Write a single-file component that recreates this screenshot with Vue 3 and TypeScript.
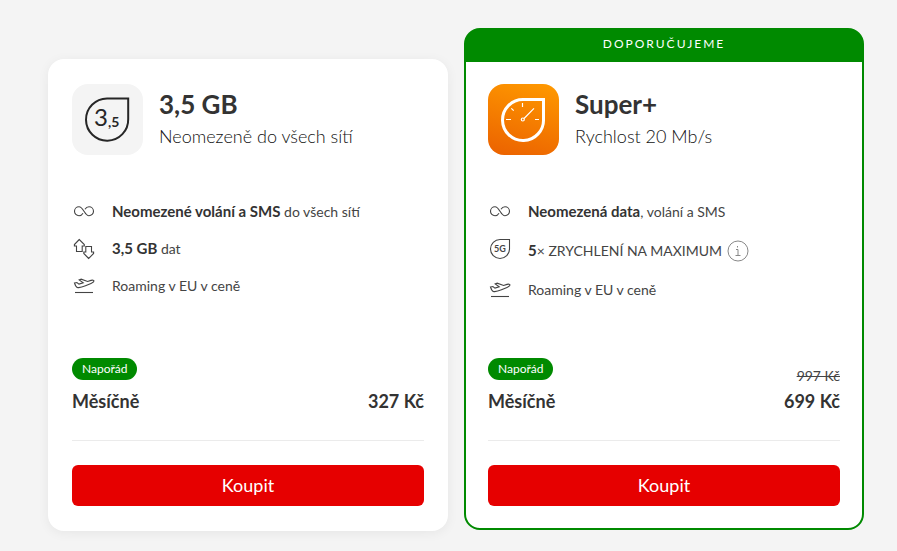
<script setup lang="ts">
type IconName = 'infinity' | 'arrows' | 'plane' | 'fiveG'

interface Feature {
  icon: IconName
  strong?: string
  text: string
  info?: boolean
}

interface Plan {
  id: string
  name: string
  subtitle: string
  tile: 'data' | 'speed'
  banner?: string
  features: Feature[]
  badge: string
  oldPrice?: string
  price: string
}

const plans: Plan[] = [
  {
    id: 'data',
    name: '3,5 GB',
    subtitle: 'Neomezeně do všech sítí',
    tile: 'data',
    features: [
      { icon: 'infinity', strong: 'Neomezené volání a SMS', text: ' do všech sítí' },
      { icon: 'arrows', strong: '3,5 GB', text: ' dat' },
      { icon: 'plane', text: 'Roaming v EU v ceně' },
    ],
    badge: 'Napořád',
    price: '327 Kč',
  },
  {
    id: 'super',
    name: 'Super+',
    subtitle: 'Rychlost 20 Mb/s',
    tile: 'speed',
    banner: 'DOPORUČUJEME',
    features: [
      { icon: 'infinity', strong: 'Neomezená data', text: ', volání a SMS' },
      { icon: 'fiveG', strong: '5', text: '× ZRYCHLENÍ NA MAXIMUM', info: true },
      { icon: 'plane', text: 'Roaming v EU v ceně' },
    ],
    badge: 'Napořád',
    oldPrice: '997 Kč',
    price: '699 Kč',
  },
]
</script>

<template>
  <main class="plans">
    <article
      v-for="plan in plans"
      :key="plan.id"
      class="card"
      :class="{ recommended: plan.banner }"
    >
      <p v-if="plan.banner" class="banner">{{ plan.banner }}</p>
      <div class="body">
        <header class="head">
          <div class="tile" :class="plan.tile">
            <svg v-if="plan.tile === 'data'" viewBox="0 0 71 71" aria-hidden="true">
              <path d="M35 14.5H56.2V35A21.1 21.1 0 1 1 35 14.5Z" fill="none" stroke="#262626" stroke-width="2" />
              <text x="22" y="42" class="tile-big">3<tspan dy="1" class="tile-small">,5</tspan></text>
            </svg>
            <svg v-else viewBox="0 0 71 71" aria-hidden="true" fill="none" stroke="#fff">
              <path d="M35 15.5H55.5V35A20.5 20.5 0 1 1 35 15.5Z" stroke-width="3" />
              <path d="M34.5 19v4M18 35.500h5M47 35.500h4M23.300 24.300l2.400 2.400M36 34.500l10-10.200" stroke-width="1.200" />
              <circle cx="34.800" cy="35.500" r="1.500" stroke-width="1.200" />
            </svg>
          </div>
          <div class="titles">
            <h2>{{ plan.name }}</h2>
            <p>{{ plan.subtitle }}</p>
          </div>
        </header>

        <ul class="features">
          <li v-for="feature in plan.features" :key="feature.icon">
            <svg class="icon" viewBox="0 0 24 24" aria-hidden="true">
              <path
                v-if="feature.icon === 'infinity'"
                d="M11 13.200C10 14.900 8.700 15.700 7 15.700A4.500 4.500 0 0 1 7 6.700C11.500 6.700 12.500 15.700 17 15.700A4.500 4.500 0 0 0 17 6.700C15.300 6.700 14 7.500 13 9.200"
              />
              <template v-else-if="feature.icon === 'arrows'">
                <path d="M7.300 2.500L2.400 7.500V9H4.500V14.500H10.200V9H12.300V7.500Z" />
                <path d="M16.700 21.500L11.800 16.500V15H13.800V9.500H19.500V15H21.600V16.500Z" />
              </template>
              <template v-else-if="feature.icon === 'plane'">
                <path d="M2.500 9l2.400-.5 2.100 1.600 4.200-1.300L7.200 6l2-.8 6.400 2.300 3.400-1.100c1.700-.5 3-.2 3 .7s-1.500 1.700-3 2.300l-5.500 2.400c-3.500 1.500-6.500 2.100-8.300 1.600-1.300-.4-1.900-2-2.700-4.400Z" />
                <path d="M3 18.500H21" />
              </template>
              <template v-else>
                <path d="M12 2.500H21.500V12A9.500 9.500 0 1 1 12 2.500Z" />
                <text x="12" y="15" class="five-g">5G</text>
              </template>
            </svg>
            <div class="feature-text">
              <span><strong v-if="feature.strong">{{ feature.strong }}</strong>{{ feature.text }}</span>
              <button v-if="feature.info" type="button" class="info" aria-label="Info">
                <svg viewBox="0 0 22 22" aria-hidden="true">
                  <circle cx="11" cy="11" r="10" />
                  <path d="M9 9.500h2v6M8.500 15.500h5M10.500 6v1.500" />
                </svg>
              </button>
            </div>
          </li>
        </ul>

        <div class="pricing">
          <div class="period">
            <span class="badge">{{ plan.badge }}</span>
            <span class="amount">Měsíčně</span>
          </div>
          <div class="price">
            <s v-if="plan.oldPrice">{{ plan.oldPrice }}</s>
            <span class="amount">{{ plan.price }}</span>
          </div>
        </div>

        <button type="button" class="buy">Koupit</button>
      </div>
    </article>
  </main>
</template>

<style>
body {
  margin: 0;
  background: #f4f4f4;
}
</style>

<style scoped>
.plans {
  display: grid;
  grid-template-columns: 1fr 1fr;
  align-items: end;
  gap: 16px;
  padding: 28px 33px 20px 48px;
  font-family: Lato, "Noto Sans", sans-serif;
  color: #333;
}

h2,
p,
ul {
  margin: 0;
  padding: 0;
}

.card {
  background: #fff;
  border-radius: 16px;
  box-shadow: 0 2px 12px rgba(0, 0, 0, 0.06);
  overflow: hidden;
}

.body {
  padding: 25px 24px;
}

.recommended {
  border: 2px solid #008a00;
  background: linear-gradient(#008a00 32px, #fff 32px);
  box-shadow: none;
  margin-bottom: 1px;
}

.recommended .body {
  padding: 22px;
}

.banner {
  padding-bottom: 4px;
  background: #008a00;
  color: #fff;
  font-size: 12px;
  line-height: 28px;
  letter-spacing: 2px;
  text-align: center;
}

.head {
  display: flex;
  gap: 16px;
}

.tile {
  width: 71px;
  height: 71px;
  border-radius: 16px;
  flex: none;
}

.tile svg {
  display: block;
}

.data {
  background: #f4f4f4;
}

.speed {
  background: linear-gradient(195deg, #ff9a00, #eb6100);
}

.tile-big {
  font-size: 24px;
  fill: #262626;
}

.tile-small {
  font-size: 14px;
  font-weight: 700;
}

.titles h2 {
  font-size: 26px;
  line-height: 40px;
  font-weight: 700;
}

.titles p {
  color: #111;
  font-size: 18px;
  line-height: 24px;
  font-weight: 300;
}

.features {
  display: flex;
  flex-direction: column;
  gap: 13px;
  min-height: 158px;
  margin-top: 45px;
  list-style: none;
}

.features li {
  display: flex;
  gap: 16px;
}

.icon {
  width: 24px;
  height: 24px;
  flex: none;
  fill: none;
  stroke: #444;
  stroke-width: 1.1;
}

.five-g {
  font-size: 9px;
  font-weight: 700;
  text-anchor: middle;
  fill: #444;
  stroke: none;
}

.feature-text {
  display: flex;
  align-items: center;
  gap: 5px;
  color: #444;
  font-size: 14px;
  line-height: 24px;
}

.feature-text strong {
  color: #333;
  font-size: 15px;
  font-weight: 700;
  line-height: 16px;
}

.info {
  display: flex;
  padding: 3px 0;
  border: 0;
  background: none;
  cursor: pointer;
}

.info svg {
  width: 22px;
  height: 22px;
  fill: none;
  stroke: #888;
}

.pricing {
  display: flex;
  justify-content: space-between;
  align-items: flex-end;
  padding-bottom: 25px;
  border-bottom: 1px solid #ebebeb;
}

.period,
.price {
  display: flex;
  flex-direction: column;
  align-items: flex-start;
}

.price {
  align-items: flex-end;
}

.badge {
  margin-bottom: 7px;
  padding: 0 10px;
  border-radius: 11px;
  background: #008a00;
  color: #fff;
  font-size: 12px;
  line-height: 22px;
}

.price s {
  color: #444;
  font-size: 14px;
  line-height: 22px;
}

.amount {
  font-size: 18px;
  line-height: 28px;
  font-weight: 700;
}

.buy {
  display: block;
  width: 100%;
  height: 41px;
  margin-top: 24px;
  padding: 0 0 2px;
  border: 0;
  border-radius: 6px;
  background: #e60000;
  color: #fff;
  font-family: inherit;
  font-size: 18px;
  cursor: pointer;
}
</style>
